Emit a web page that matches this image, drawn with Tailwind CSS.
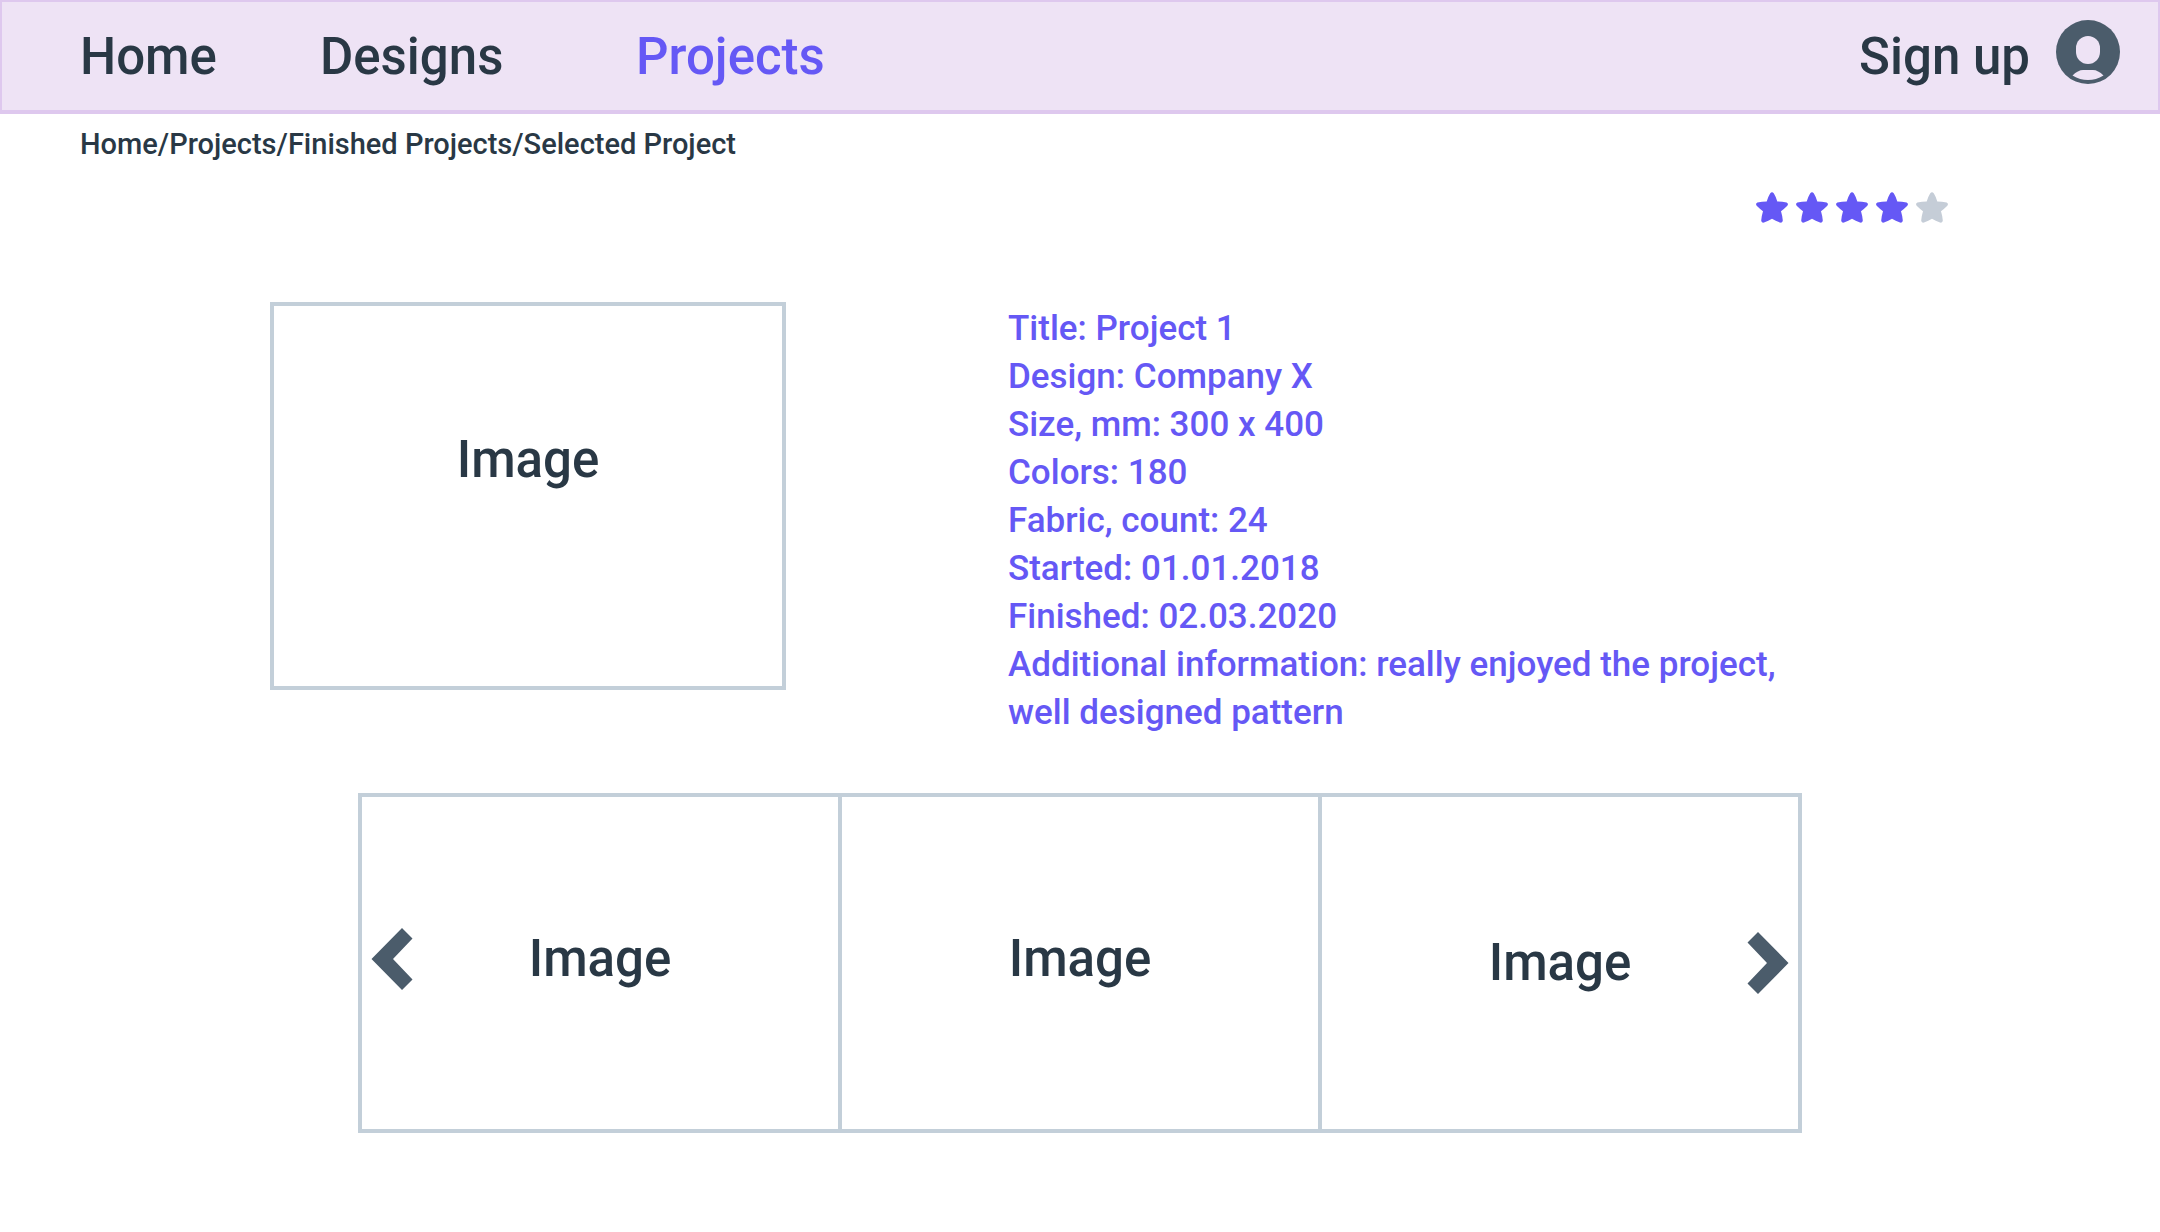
<!DOCTYPE html>
<html lang="en">
<head>
<meta charset="utf-8">
<meta name="viewport" content="width=device-width, initial-scale=1">
<title>Selected Project</title>
<script src="https://cdn.jsdelivr.net/npm/@tailwindcss/browser@4"></script>
</head>
<body class="min-h-screen bg-white font-[Roboto,sans-serif] font-medium text-[#293845]">
<svg class="hidden" aria-hidden="true">
  <symbol id="star" viewBox="0 0 32 31">
    <path d="M14.1 1.6Q16-1 17.9 1.6Q20.2 5.500 21.300 9.400Q26 9.400 30.600 10.500Q33.200 12 30.800 14.200Q28 17 25 19.200Q26.500 24 26.800 28.600Q26.600 31.200 24 30.500Q19.500 28.800 16 26.700Q12.500 28.800 8 30.500Q5.400 31.200 5.200 28.600Q5.500 24 7 19.200Q4 17 1.200 14.200Q-1.200 12 1.400 10.500Q6 9.400 10.700 9.400Q11.800 5.500 14.100 1.600Z" fill="currentColor"/>
  </symbol>
</svg>

<header class="flex items-center justify-between border-2 border-b-4 border-[#dec8ee] bg-[#eee3f5] pt-0.5 pr-[38px] pl-[78px] text-[51px] leading-[106px]">
  <nav class="grid grid-cols-[240px_316px_auto]" aria-label="Main">
    <a href="#home">Home</a>
    <a href="#designs">Designs</a>
    <a href="#projects" aria-current="page" class="text-[#6558f5]">Projects</a>
  </nav>
  <a href="#signup" class="flex gap-[26px]">
    Sign up
    <svg class="mt-4 size-16 shrink-0" viewBox="0 0 64 64" aria-hidden="true">
      <circle cx="32" cy="32" r="32" fill="#4b5c6b"/>
      <rect x="20" y="16" width="24" height="28" rx="12" fill="#eee3f5"/>
      <path d="M16.500 55.500Q22 50 27 50H37Q42 50 47.500 55.500Q40 60 32 60T16.500 55.500Z" fill="#eee3f5"/>
    </svg>
  </a>
</header>

<nav class="pt-[10px] pl-20 text-[29px] leading-10" aria-label="Breadcrumb">
  <a href="#home">Home</a>/<a href="#projects">Projects</a>/<a href="#finished">Finished Projects</a>/<a href="#selected" aria-current="page">Selected Project</a>
</nav>

<main>
  <div class="mt-7 flex justify-end gap-2 pr-[212px] text-[#6558f5]" role="img" aria-label="Rated 4 out of 5">
    <svg class="h-[31px] w-8"><use href="#star"/></svg>
    <svg class="h-[31px] w-8"><use href="#star"/></svg>
    <svg class="h-[31px] w-8"><use href="#star"/></svg>
    <svg class="h-[31px] w-8"><use href="#star"/></svg>
    <svg class="h-[31px] w-8 text-[#c5cdd7]"><use href="#star"/></svg>
  </div>

  <section class="mx-auto mt-[79px] grid max-w-[1620px] grid-cols-[516fr_882fr] items-start gap-x-[222px]">
    <div class="flex h-[388px] justify-center border-4 border-[#c3cfd9] pt-[120px] text-[51px] leading-[68px]">Image</div>
    <div class="max-w-[800px] pt-[3px] text-[35px] leading-12 text-[#6558f5]">
      <p>Title: Project 1</p>
      <p>Design: Company X</p>
      <p>Size, mm: 300 x 400</p>
      <p>Colors: 180</p>
      <p>Fabric, count: 24</p>
      <p>Started: 01.01.2018</p>
      <p>Finished: 02.03.2020</p>
      <p>Additional information: really enjoyed the project, well designed pattern</p>
    </div>
  </section>

  <section class="mx-auto mt-14 mb-12 grid h-[340px] max-w-[1444px] grid-cols-3 gap-1 bg-[#c3cfd9] p-1 text-[51px] leading-[68px]" aria-label="Project images">
    <div class="relative flex items-center justify-center bg-white pb-2">
      <button type="button" aria-label="Previous image" class="absolute left-[9px] cursor-pointer text-[#4b5c6b]">
        <svg class="h-[62px] w-[42px]" viewBox="0 0 42 62" aria-hidden="true"><path d="M31 0 41.500 10.500 22 31 41.500 51.500 31 62 .500 31Z" fill="currentColor"/></svg>
      </button>
      Image
    </div>
    <div class="flex items-center justify-center bg-white pb-2">Image</div>
    <div class="relative flex items-center justify-center bg-white">
      Image
      <button type="button" aria-label="Next image" class="absolute right-[9px] cursor-pointer text-[#4b5c6b]">
        <svg class="h-[62px] w-[42px]" viewBox="0 0 42 62" aria-hidden="true"><path d="M11 0 .500 10.500 20 31 .500 51.500 11 62 41.500 31Z" fill="currentColor"/></svg>
      </button>
    </div>
  </section>
</main>
</body>
</html>
